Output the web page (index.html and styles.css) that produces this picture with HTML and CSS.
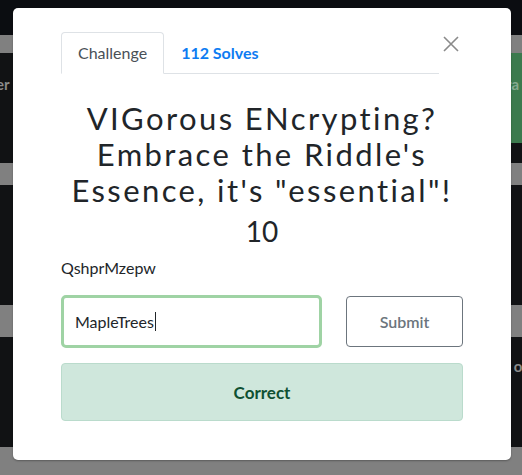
FILE: index.html
```html
<!DOCTYPE html>
<html>
<head>
<meta charset="utf-8">
<link rel="stylesheet" href="styles.css">
</head>
<body>
<div class="page">
  <div class="band nav-band"></div>
  <div class="band gray g1"></div>
  <div class="band dark r1">
    <span class="peek peek-left">er</span>
    <div class="green-card"><span class="peek peek-green">ra</span></div>
  </div>
  <div class="band gray g2"></div>
  <div class="band dark r2"></div>
  <div class="band gray g3"></div>
  <div class="band dark r3"><span class="peek peek-right">or</span></div>
  <div class="band gray g4"></div>
</div>

<div class="modal">
  <div class="modal-header">
    <div class="tabs">
      <div class="tab active">Challenge</div>
      <div class="tab link">112 Solves</div>
    </div>
    <div class="close">
      <svg width="16" height="16" viewBox="0 0 16 16"><path d="M1 1 L15 15 M15 1 L1 15" stroke="#8a8a8a" stroke-width="1.6" fill="none"/></svg>
    </div>
  </div>
  <h2 class="title">VIGorous ENcrypting? Embrace the Riddle's Essence, it's "essential"!</h2>
  <h3 class="points">10</h3>
  <p class="desc">QshprMzepw</p>
  <div class="answer-row">
    <div class="input">MapleTrees<span class="caret"></span></div>
    <div class="submit">Submit</div>
  </div>
  <div class="alert">Correct</div>
</div>
</body>
</html>
```
FILE: styles.css
```css
* { box-sizing: border-box; }
html, body {
  margin: 0;
  padding: 0;
}
body {
  width: 522px;
  height: 475px;
  overflow: hidden;
  position: relative;
  font-family: Lato, "Open Sans", sans-serif;
  background: #808080;
}
.page {
  display: flex;
  flex-direction: column;
}
.band { position: relative; overflow: hidden; }
.nav-band { height: 35px; background: #0b0d11; }
.gray { background: #808080; }
.dark { background: #111214; }
.g1 { height: 18px; }
.r1 { height: 110px; }
.g2 { height: 22px; }
.r2 { height: 120px; }
.g3 { height: 32px; }
.r3 { height: 110px; }
.g4 { height: 28px; }
.green-card {
  position: absolute;
  right: 0;
  top: -8px;
  width: 40px;
  height: 98px;
  background: #3c7a4e;
}
.peek {
  position: absolute;
  font-weight: 700;
  font-size: 15px;
  color: #8a8a8a;
}
.peek-left { left: -4px; top: 22px; }
.peek-green { left: 24px; top: 30px; color: #86a98f; }
.peek-right { right: -6px; top: 20px; }

.modal {
  position: absolute;
  left: 13px;
  top: 8px;
  width: 498px;
  height: 452px;
  background: #fff;
  border-radius: 5px;
  padding: 24px 48px 40px;
  color: #212529;
  box-shadow: 0 1px 2px rgba(0,0,0,0.3);
}
.modal-header {
  display: flex;
  align-items: flex-start;
}
.tabs {
  flex: 1;
  display: flex;
  border-bottom: 1px solid #dee2e6;
}
.tab {
  font-size: 16px;
  line-height: 24px;
  padding: 8px 16px;
  border: 1px solid transparent;
  border-radius: 4px 4px 0 0;
  margin-bottom: -1px;
}
.tab.active {
  color: #495057;
  border-color: #dee2e6 #dee2e6 #fff;
  background: #fff;
}
.tab.link {
  color: #0d7cf2;
  font-weight: 700;
}
.close {
  width: 24px;
  height: 24px;
  display: flex;
  align-items: center;
  justify-content: center;
}
.title {
  margin: 26px 0 0;
  font-size: 31px;
  line-height: 36px;
  font-weight: 400;
  text-align: center;
  letter-spacing: 2.4px;
  padding: 0 4px;
}
.points {
  margin: 6px 0 0;
  font-size: 28px;
  line-height: 34px;
  font-weight: 400;
  text-align: center;
}
.desc {
  margin: 8px 0 0;
  font-size: 16px;
  line-height: 24px;
}
.answer-row {
  margin-top: 15px;
  display: flex;
  gap: 24px;
  align-items: center;
}
.input {
  width: 261px;
  height: 53px;
  border: 3px solid #9fd3a4;
  border-radius: 5px;
  padding: 0 11px;
  display: flex;
  align-items: center;
  font-size: 16px;
  color: #212529;
}
.caret {
  display: inline-block;
  width: 1px;
  height: 19px;
  background: #212529;
  margin-left: 1px;
}
.submit {
  flex: 1;
  height: 51px;
  border: 1px solid #6c757d;
  border-radius: 4px;
  display: flex;
  align-items: center;
  justify-content: center;
  color: #6c757d;
  font-size: 16px;
  font-weight: 600;
}
.alert {
  margin-top: 15px;
  height: 58px;
  background: #cfe7dc;
  border: 1px solid #badbcc;
  border-radius: 4px;
  display: flex;
  align-items: center;
  justify-content: center;
  color: #0f5132;
  font-weight: 700;
  font-size: 17px;
}
```
